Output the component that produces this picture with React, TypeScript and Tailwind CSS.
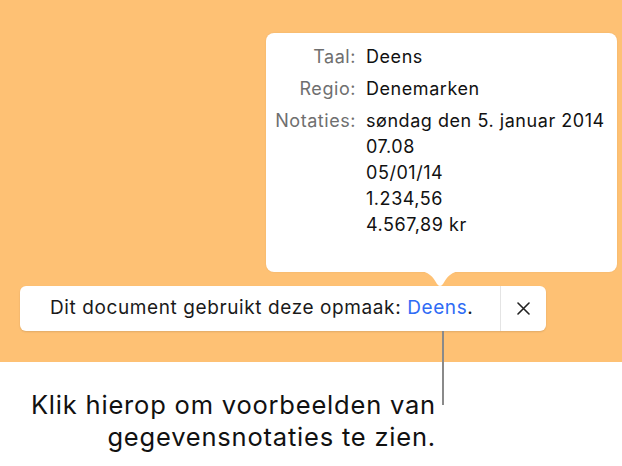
export default function App() {
  return (
    <div className="relative w-[622px] h-[466px] bg-white overflow-hidden font-['Inter',sans-serif]">
      {/* Orange canvas */}
      <div className="h-[362px] bg-[#fec174] pt-[33px]">
        {/* Popover */}
        <div className="relative ml-[266px] w-[351px] h-[239px] rounded-[8px] bg-white pt-[11px] shadow-[0_0_2px_rgba(0,0,0,0.08)]">
          <div className="grid grid-cols-[90px_1fr] gap-x-[10px] text-[18px] leading-[26px] tracking-[0.55px] text-[#111]">
            <div className="text-right text-[#6f6f6f]">Taal:</div>
            <div>Deens</div>
            <div className="mt-[6px] text-right text-[#6f6f6f]">Regio:</div>
            <div className="mt-[6px]">Denemarken</div>
            <div className="mt-[6px] text-right text-[#6f6f6f]">Notaties:</div>
            <div className="mt-[6px] flex flex-col">
              <span>søndag den 5. januar 2014</span>
              <span>07.08</span>
              <span>05/01/14</span>
              <span>1.234,56</span>
              <span>4.567,89 kr</span>
            </div>
          </div>
          <svg
            className="absolute left-[151px] top-[238px]"
            width="46"
            height="17"
            viewBox="0 0 46 17"
          >
            <path d="M0 0 C12 0 16 6 20 13 Q23 17 26 13 C30 6 34 0 46 0 Z" fill="#ffffff" />
          </svg>
        </div>

        {/* Notice bar */}
        <div className="mt-[14px] ml-[20px] w-[526px] h-[45px] flex items-stretch rounded-[6px] bg-white shadow-[0_1px_2px_rgba(0,0,0,0.12)]">
          <div className="flex-1 flex items-center pl-[30px] text-[19px] tracking-[0.6px] text-[#1a1a1a]">
            Dit document gebruikt deze opmaak:&nbsp;<span className="text-[#2f6cf5]">Deens</span>.
          </div>
          <div className="w-px bg-[#e4e4e4]" />
          <button className="w-[45px] flex items-center justify-center text-[#222]">
            <svg width="13" height="13" viewBox="0 0 13 13">
              <path d="M1 1 L12 12 M12 1 L1 12" stroke="currentColor" strokeWidth="1.6" strokeLinecap="round" />
            </svg>
          </button>
        </div>
      </div>

      {/* Callout line */}
      <div className="absolute left-[442px] top-[331px] w-[2px] h-[74px] bg-[#8a8a8a]" />

      {/* Caption */}
      <div className="mt-[27px] w-[436px] text-right text-[25.5px] leading-[32px] tracking-[0.8px] text-[#111]">
        Klik hierop om voorbeelden van
        <br />
        gegevensnotaties te zien.
      </div>
    </div>
  )
}
